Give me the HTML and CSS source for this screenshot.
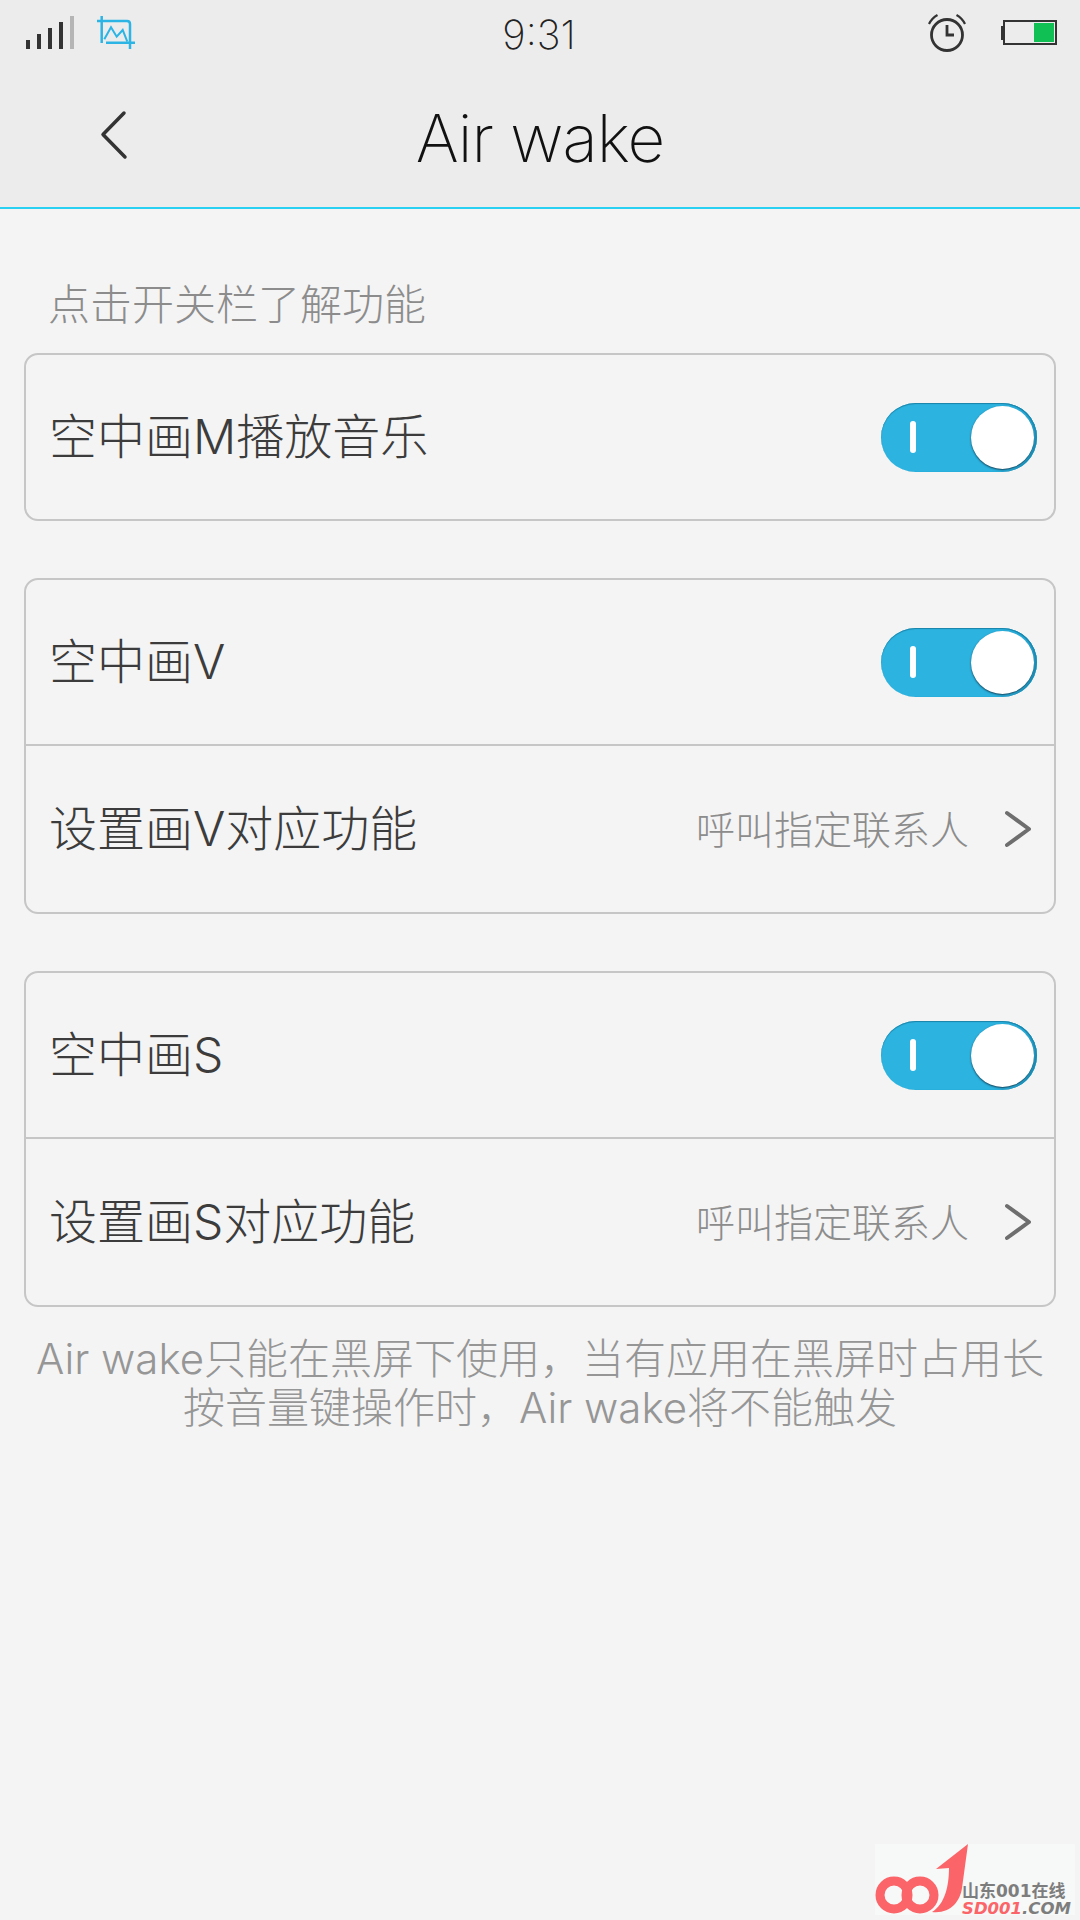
FILE: index.html
```html
<!DOCTYPE html>
<html lang="zh-CN">

<head>
    <meta charset="UTF-8">
    <meta name="viewport" content="width=device-width, initial-scale=1.0">
    <title>Air wake</title>
    <link rel="stylesheet" href="styles.css">
</head>

<body>
    <header class="top">
        <div class="status-bar">
            <div class="status-left">
                <svg class="icon-signal" width="48" height="33" viewBox="0 0 48 33">
                    <rect x="0" y="24" width="4" height="9" fill="#333" />
                    <rect x="11" y="18" width="4" height="15" fill="#333" />
                    <rect x="22" y="12" width="4" height="21" fill="#333" />
                    <rect x="33" y="6" width="4" height="27" fill="#333" />
                    <rect x="44" y="0" width="4" height="33" fill="#b5b5b5" />
                </svg>
                <svg class="icon-shot" width="38" height="33" viewBox="0 0 38 33" fill="none" stroke="#2cb5e4" stroke-width="2.500">
                    <path d="M4.700 0V27M0 5H30Q33 5 33 8V33M9 26.700H38" />
                    <path d="M7.300 23.300L14 11.300L19.700 20.700L25.700 14L30.300 25.700" stroke-width="2" />
                </svg>
            </div>
            <div class="status-time">9:31</div>
            <div class="status-right">
                <svg class="icon-alarm" width="38" height="38" viewBox="0 0 38 38" fill="none" stroke="#333">
                    <circle cx="19" cy="21" r="15.500" stroke-width="2.800" />
                    <path d="M19 11V21H26" stroke-width="2.800" />
                    <path d="M1 10Q4 4 9.500 1M37 10Q34 4 28.500 1" stroke-width="2.200" />
                </svg>
                <div class="battery">
                    <div class="battery-level"></div>
                </div>
            </div>
        </div>
        <div class="title-bar">
            <svg class="icon-back" width="28" height="50" viewBox="0 0 28 50" fill="none" stroke="#333" stroke-width="3.500" stroke-linecap="round" stroke-linejoin="round">
                <path d="M24 3L3 24.500L25 47" />
            </svg>
            <h1>Air wake</h1>
        </div>
    </header>

    <main class="content">
        <p class="hint">点击开关栏了解功能</p>

        <section class="group">
            <div class="row">
                <span class="row-label">空中画M播放音乐</span>
                <div class="switch"><span class="switch-mark"></span><span class="switch-knob"></span></div>
            </div>
        </section>

        <section class="group">
            <div class="row">
                <span class="row-label">空中画V</span>
                <div class="switch"><span class="switch-mark"></span><span class="switch-knob"></span></div>
            </div>
            <div class="row">
                <span class="row-label">设置画V对应功能</span>
                <span class="row-value">呼叫指定联系人</span>
                <svg class="icon-more" width="28" height="38" viewBox="0 0 28 38" fill="none" stroke="#6e6e6e" stroke-width="4" stroke-linecap="round" stroke-linejoin="round">
                    <path d="M3 3L25 19L3 35" />
                </svg>
            </div>
        </section>

        <section class="group">
            <div class="row">
                <span class="row-label">空中画S</span>
                <div class="switch"><span class="switch-mark"></span><span class="switch-knob"></span></div>
            </div>
            <div class="row">
                <span class="row-label">设置画S对应功能</span>
                <span class="row-value">呼叫指定联系人</span>
                <svg class="icon-more" width="28" height="38" viewBox="0 0 28 38" fill="none" stroke="#6e6e6e" stroke-width="4" stroke-linecap="round" stroke-linejoin="round">
                    <path d="M3 3L25 19L3 35" />
                </svg>
            </div>
        </section>

        <p class="note">Air wake只能在黑屏下使用，当有应用在黑屏时占用长<br>按音量键操作时，Air wake将不能触发</p>
    </main>

    <div class="watermark">
        <svg class="watermark-logo" width="100" height="71" viewBox="0 0 100 71" fill="none">
            <circle cx="19" cy="51" r="14" stroke="#fb6468" stroke-width="9" />
            <circle cx="45" cy="51" r="14" stroke="#fb6468" stroke-width="9" />
            <path d="M93 0L61 25L74 24C74 42 70 60 57 68C75 70 85 58 87 44Z" fill="#fb6468" />
        </svg>
        <div class="watermark-text">
            <div class="watermark-cn">山东001在线</div>
            <div class="watermark-en"><span class="watermark-red">SD001</span>.COM</div>
        </div>
    </div>
</body>

</html>
```

FILE: styles.css
```css
* {
    box-sizing: border-box;
}

body {
    position: relative;
    margin: 0;
    width: 1080px;
    height: 1920px;
    overflow: hidden;
    background: #f4f4f4;
    font-family: "Inter", "Noto Sans CJK SC", sans-serif;
    font-weight: 300;
}

.top {
    height: 209px;
    background: #ececec;
    border-bottom: 2px solid #2ad0f2;
}

.status-bar {
    position: relative;
    display: flex;
    justify-content: space-between;
    height: 68px;
    padding: 14px 23px 0 26px;
}

.status-left {
    display: flex;
    align-items: flex-start;
    gap: 23px;
    padding-top: 2px;
}

.status-time {
    position: absolute;
    left: 0;
    right: 2px;
    top: 11px;
    text-align: center;
    font-size: 40px;
    font-weight: 200;
    line-height: 47px;
    color: #222;
}

.status-right {
    display: flex;
    align-items: flex-start;
    gap: 37px;
}

.battery {
    position: relative;
    width: 54px;
    height: 25px;
    margin-top: 6px;
    padding: 1px;
    display: flex;
    justify-content: flex-end;
    border: 2px solid #333;
}

.battery::before {
    content: "";
    position: absolute;
    left: -4px;
    top: 4px;
    width: 3px;
    height: 14px;
    background: #333;
}

.battery-level {
    width: 20px;
    background: #10c055;
}

.title-bar {
    position: relative;
    display: flex;
    align-items: center;
    justify-content: center;
    height: 139px;
}

.icon-back {
    position: absolute;
    left: 100px;
    top: 42px;
}

h1 {
    margin: 2px 0 0;
    font-size: 65.500px;
    font-weight: 200;
    letter-spacing: -1px;
    color: #111;
    line-height: 90px;
}

.content {
    padding: 0 24px;
}

.hint {
    margin: 0;
    height: 144px;
    padding: 66px 0 0 24px;
    font-size: 42px;
    line-height: 60px;
    color: #8c8c8c;
}

.group {
    margin-bottom: 57px;
    border: 2px solid #c6c6c6;
    border-radius: 14px;
}

.row {
    display: flex;
    align-items: center;
    height: 164px;
    padding: 0 18px 0 23px;
}

.row+.row {
    height: 168px;
    border-top: 2px solid #c6c6c6;
}

.row-label {
    flex: 1;
    padding-bottom: 8px;
    font-size: 48px;
    color: #3c3c3c;
}

.row-value {
    margin-right: 35px;
    padding-bottom: 4px;
    font-size: 39px;
    color: #8c8c8c;
}

.icon-more {
    margin-right: 4px;
}

.switch {
    position: relative;
    width: 156px;
    height: 69px;
    margin-right: -1px;
    border-radius: 35px;
    background: #2cb3e0;
    box-shadow: inset 0 1px 1px #1b83a8, inset -2px 0 1px #1b8fb8;
}

.switch-mark {
    position: absolute;
    left: 29px;
    top: 18px;
    width: 6px;
    height: 32px;
    border-radius: 3px;
    background: #fff;
}

.switch-knob {
    position: absolute;
    right: 3px;
    top: 3px;
    width: 63px;
    height: 63px;
    border-radius: 50%;
    background: #fff;
    box-shadow: 0 1px 2px #123f55;
}

.note {
    margin: -30px -14px 0;
    text-align: center;
    font-size: 42px;
    line-height: 49px;
    color: #969696;
}

.watermark {
    position: absolute;
    right: 5px;
    bottom: 5px;
    display: flex;
    width: 200px;
    height: 71px;
    background: #f7f8f8;
}

.watermark-logo {
    position: absolute;
    left: 0;
    top: 0;
}

.watermark-text {
    position: absolute;
    left: 87px;
    top: 37px;
    font-family: "DejaVu Sans", "Noto Sans CJK SC", sans-serif;
    font-weight: 700;
    white-space: nowrap;
    color: #7d7d7d;
}

.watermark-cn {
    font-size: 17px;
    line-height: 21px;
}

.watermark-en {
    font-size: 16.500px;
    font-style: italic;
    line-height: 14px;
}

.watermark-red {
    color: #fb6468;
}
```
